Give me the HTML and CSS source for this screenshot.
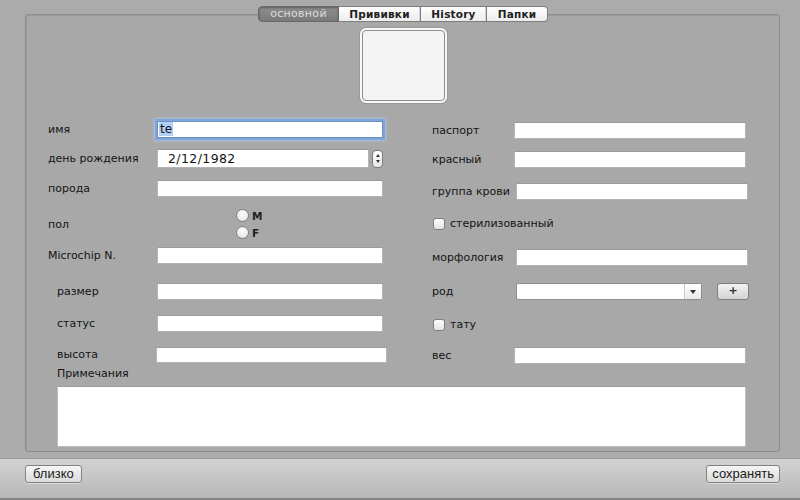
FILE: index.html
```html
<!DOCTYPE html>
<html>
<head>
<meta charset="utf-8">
<link rel="stylesheet" href="styles.css">
</head>
<body>
<div class="window">
  <div class="content">
    <div class="tabs">
      <div class="tab selected">основной</div>
      <div class="tab">Прививки</div>
      <div class="tab">History</div>
      <div class="tab">Папки</div>
    </div>
    <div class="box">
      <div class="well-wrap"><div class="well"><div class="well-inner"></div></div></div>
      <div class="columns">
        <div class="col left">
          <div class="row"><span class="label">имя</span><div class="field focus"><span class="sel">te</span></div></div>
          <div class="row date-row"><span class="label">день рождения</span><div class="field date">2/12/1982</div><div class="stepper"><span class="up"></span><span class="down"></span></div></div>
          <div class="row"><span class="label">порода</span><div class="field"></div></div>
          <div class="row radio-row"><span class="label">пол</span>
            <div class="radios">
              <div class="radio-item"><span class="radio"></span>M</div>
              <div class="radio-item"><span class="radio"></span>F</div>
            </div>
          </div>
          <div class="row"><span class="label">Microchip N.</span><div class="field"></div></div>
          <div class="row"><span class="label indent">размер</span><div class="field"></div></div>
          <div class="row"><span class="label indent">статус</span><div class="field"></div></div>
          <div class="row"><span class="label indent narrow">высота</span><div class="field tall"></div></div>
        </div>
        <div class="col right">
          <div class="row"><span class="label">паспорт</span><div class="field"></div></div>
          <div class="row"><span class="label">красный</span><div class="field"></div></div>
          <div class="row"><span class="label wide">группа крови</span><div class="field"></div></div>
          <div class="row check-row"><span class="checkbox"></span><span class="check-label">стерилизованный</span></div>
          <div class="row"><span class="label wide">морфология</span><div class="field"></div></div>
          <div class="row"><span class="label wide">род</span><div class="combo"><div class="combo-text"></div><div class="combo-arrow"></div></div><div class="plus">+</div></div>
          <div class="row check-row"><span class="checkbox"></span><span class="check-label">тату</span></div>
          <div class="row"><span class="label">вес</span><div class="field"></div></div>
        </div>
      </div>
      <div class="notes-label">Примечания</div>
      <div class="notes"></div>
    </div>
  </div>
  <div class="bottom">
    <div class="btn">близко</div>
    <div class="btn">сохранять</div>
  </div>
</div>
</body>
</html>
```
FILE: styles.css
```css
html, body {
  margin: 0;
  padding: 0;
}
body {
  width: 800px;
  height: 500px;
  overflow: hidden;
  background: #ababab;
  font-family: "DejaVu Sans", sans-serif;
  font-size: 11px;
  color: #141414;
}
.window {
  display: flex;
  flex-direction: column;
  height: 500px;
}
.content {
  height: 458px;
  padding: 6px 20px 0 25px;
  box-sizing: border-box;
}
.tabs {
  display: flex;
  justify-content: center;
  position: relative;
  z-index: 2;
  margin-bottom: -8px;
  margin-left: 1px;
}
.tab {
  height: 14px;
  line-height: 14px;
  border: 1px solid #7d7d7d;
  border-left: none;
  background: linear-gradient(#ffffff, #ececec);
  font-weight: bold;
  font-size: 10.5px;
  letter-spacing: 0.2px;
  color: #222;
  padding: 0 8px;
  text-align: center;
  box-shadow: inset -1px 0 0 #d4d4d4;
}
.tab:nth-child(2) { width: 65px; }
.tab:nth-child(3) { width: 49px; }
.tab:nth-child(4) { width: 44px; border-radius: 0 4px 4px 0; box-shadow: none; }
.tab.selected {
  width: 63px;
  border-left: 1px solid #6a6a6a;
  border-color: #6a6a6a;
  border-radius: 4px 0 0 4px;
  background: linear-gradient(#8e8e8e, #7a7a7a);
  color: #dcdcdc;
  font-weight: normal;
  font-size: 11px;
  letter-spacing: 0.3px;
  box-shadow: inset 0 1px 2px rgba(0,0,0,0.35);
}
.box {
  width: 755px;
  height: 438px;
  box-sizing: border-box;
  border: 1px solid #8c8c8c;
  border-radius: 3px;
  background: #a8a8a8;
  box-shadow: inset 1px 1px 0 #9c9c9c;
  padding: 13px 0 0 22px;
}
.well-wrap {
  display: flex;
  justify-content: center;
  margin-left: 312px;
  width: 87px;
}
.well {
  width: 87px;
  height: 75px;
  box-sizing: border-box;
  border: 2px solid #f8f8f8;
  border-radius: 6px;
  background: #f3f3f3;
  box-shadow: 0 0 0 1px #9a9a9a;
}
.well-inner {
  height: 100%;
  border: 1px solid #8e8e8e;
  border-radius: 4px;
  box-sizing: border-box;
  background: #f4f4f4;
}
.columns {
  display: flex;
  margin-top: 18px;
}
.col {
  display: grid;
  align-items: start;
}
.col.left {
  width: 339px;
  grid-template-rows: 28px 31px 28px 39px 36px 32px 31px 16px;
}
.col.right {
  width: 316px;
  margin-left: 45px;
  padding-top: 1px;
  grid-template-rows: 29px 32px 33px 33px 34px 34px 30px 16px;
}
.row {
  display: flex;
  align-items: center;
  height: 17px;
}
.label {
  width: 109px;
  flex-shrink: 0;
  white-space: nowrap;
}
.label.indent {
  width: 100px;
  padding-left: 9px;
}
.label.indent.narrow { width: 99px; }
.right .label { width: 82px; }
.right .label.wide { width: 84px; }
.field {
  width: 226px;
  height: 17px;
  box-sizing: border-box;
  background: #ffffff;
  border: 1px solid #b4b4b4;
  border-top-color: #9a9a9a;
  font-size: 12px;
  line-height: 15px;
  padding-left: 3px;
}
.right .field { width: 232px; }
.field.tall { width: 231px; height: 16px; }
.field.focus {
  box-shadow: 0 0 0 2px #7ea6dc, 0 0 2px 3px #a9c3e6;
  border-color: #6f8fbf;
  padding-left: 1px;
}
.sel {
  background: #b3cff5;
  padding: 0 1px;
}
.date-row { height: 19px; }
.field.date {
  width: 212px;
  height: 19px;
  line-height: 17px;
  padding-left: 10px;
  font-size: 12.5px;
  letter-spacing: 0.4px;
}
.stepper {
  width: 11px;
  height: 18px;
  margin-left: 3px;
  box-sizing: border-box;
  border: 1px solid #7c7c7c;
  border-radius: 4px;
  background: linear-gradient(#ffffff, #e6e6e6);
  display: flex;
  flex-direction: column;
  align-items: center;
  justify-content: center;
  gap: 3px;
}
.up, .down {
  width: 0;
  height: 0;
  border-left: 2px solid transparent;
  border-right: 2px solid transparent;
}
.up { border-bottom: 3px solid #333; }
.down { border-top: 3px solid #333; }
.radio-row { height: 32px; }
.radios {
  display: flex;
  flex-direction: column;
  gap: 4px;
  margin-left: 79px;
}
.radio-item {
  display: flex;
  align-items: center;
  gap: 3px;
  height: 13px;
  font-weight: bold;
  font-size: 10.5px;
  color: #222;
}
.radio {
  width: 13px;
  height: 13px;
  box-sizing: border-box;
  border: 1px solid #7f7f7f;
  border-radius: 50%;
  background: radial-gradient(circle at 50% 35%, #ffffff, #dedede);
}
.check-row { height: 15px; }
.checkbox {
  width: 12px;
  height: 12px;
  box-sizing: border-box;
  border: 1px solid #7f7f7f;
  border-radius: 3px;
  background: linear-gradient(#ffffff, #e2e2e2);
  margin-left: 1px;
  margin-right: 5px;
}
.combo {
  display: flex;
  width: 186px;
  height: 17px;
  box-sizing: border-box;
  border: 1px solid #8e8e8e;
  border-radius: 2px;
  background: #ffffff;
}
.combo-text { flex: 1; }
.combo-arrow {
  width: 16px;
  border-left: 1px solid #c8c8c8;
  background: linear-gradient(#ffffff, #e9e9e9);
  display: flex;
  align-items: center;
  justify-content: center;
}
.combo-arrow::after {
  content: "";
  border-left: 3px solid transparent;
  border-right: 3px solid transparent;
  border-top: 4px solid #333;
}
.plus {
  width: 32px;
  height: 17px;
  margin-left: 15px;
  box-sizing: border-box;
  border: 1px solid #7e7e7e;
  border-radius: 3px;
  background: linear-gradient(#f2f2f2, #d4d4d4);
  text-align: center;
  line-height: 14px;
  font-weight: bold;
  font-size: 11px;
  color: #333;
}
.notes-label {
  margin-top: 4px;
  padding-left: 9px;
  height: 14px;
  line-height: 14px;
}
.notes {
  margin: 5px 0 0 9px;
  width: 689px;
  height: 61px;
  box-sizing: border-box;
  background: #ffffff;
  border: 1px solid #bdbdbd;
  border-top-color: #9c9c9c;
}
.bottom {
  flex: 1;
  display: flex;
  justify-content: space-between;
  align-items: flex-start;
  padding: 6px 20px 0 25px;
  border-top: 1px solid #9a9a9a;
  border-bottom: 2px solid #858585;
  background: linear-gradient(#d2d2d2, #b8b8b8);
}
.btn {
  height: 18px;
  box-sizing: border-box;
  padding: 0 7px;
  border: 1px solid #838383;
  border-radius: 3px;
  background: linear-gradient(#f6f6f6, #dadada);
  font-family: "Liberation Sans", sans-serif;
  font-size: 13px;
  line-height: 16px;
  color: #1a1a1a;
  box-shadow: 0 1px 0 rgba(255,255,255,0.4);
}
.btn:last-child { padding: 0 5px; }
```
